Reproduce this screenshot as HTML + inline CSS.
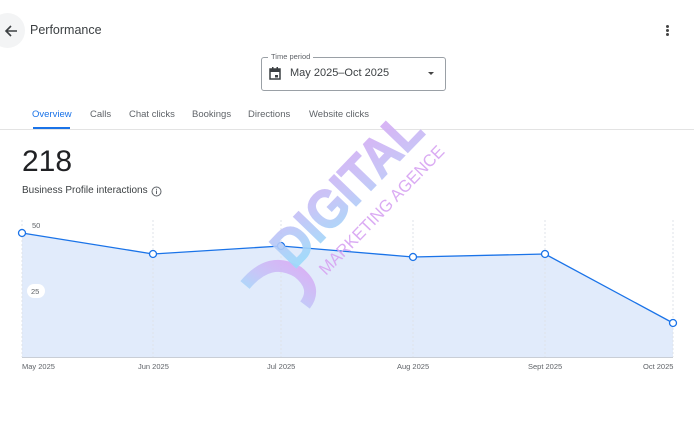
<!DOCTYPE html>
<html><head><meta charset="utf-8">
<style>
*{margin:0;padding:0;box-sizing:border-box}
html,body{width:694px;height:437px;background:#fff;overflow:hidden;font-family:"Liberation Sans",Arial,sans-serif;color:#202124;position:relative}
.abs{position:absolute}
</style></head><body>
<div class="abs" style="left:-10px;top:13px;width:35px;height:35px;border-radius:50%;background:#f3f4f5"></div>
<svg class="abs" style="left:3px;top:23px" width="16" height="16" viewBox="0 0 16 16"><path d="M14 8H3M8 3L3 8l5 5" stroke="#3c4043" stroke-width="1.6" fill="none"/></svg>
<div class="abs" style="left:30px;top:23px;font-size:12.5px;color:#3c4043">Performance</div>
<div class="abs" style="left:666px;top:25px;width:3px;height:3px;background:#444;border-radius:50%"></div>
<div class="abs" style="left:666px;top:29px;width:3px;height:3px;background:#444;border-radius:50%"></div>
<div class="abs" style="left:666px;top:33px;width:3px;height:3px;background:#444;border-radius:50%"></div>

<div class="abs" style="left:261px;top:57px;width:185px;height:34px;border:1px solid #9aa0a6;border-radius:3px"></div>
<div class="abs" style="left:268px;top:52px;background:#fff;padding:0 3px;font-size:7.5px;color:#5f6368">Time period</div>
<svg class="abs" style="left:269px;top:67px" width="12" height="13" viewBox="0 0 12 13"><rect x="1" y="2" width="10" height="10" fill="none" stroke="#3c4043" stroke-width="1.5"/><rect x="1" y="2" width="10" height="3" fill="#3c4043"/><rect x="3" y="0" width="1.5" height="3" fill="#3c4043"/><rect x="7.5" y="0" width="1.5" height="3" fill="#3c4043"/><rect x="6" y="8" width="3" height="2.5" fill="#3c4043"/></svg>
<div class="abs" style="left:290px;top:67px;font-size:11px;color:#3c4043">May 2025–Oct 2025</div>
<div class="abs" style="left:428px;top:72px;width:0;height:0;border-left:3.5px solid transparent;border-right:3.5px solid transparent;border-top:3.5px solid #444"></div>

<div class="abs" style="left:32px;top:109px;font-size:9.5px;color:#1a73e8">Overview</div>
<div class="abs" style="left:33px;top:127px;width:37px;height:2px;background:#1a73e8"></div>
<div class="abs" style="left:90px;top:109px;font-size:9.5px;color:#5f6368">Calls</div>
<div class="abs" style="left:129px;top:109px;font-size:9.5px;color:#5f6368">Chat clicks</div>
<div class="abs" style="left:192px;top:109px;font-size:9.5px;color:#5f6368">Bookings</div>
<div class="abs" style="left:248px;top:109px;font-size:9.5px;color:#5f6368">Directions</div>
<div class="abs" style="left:309px;top:109px;font-size:9.5px;color:#5f6368">Website clicks</div>
<div class="abs" style="left:0;top:129px;width:694px;height:1px;background:#e3e3e3"></div>

<div class="abs" style="left:22px;top:145px;font-size:30px;color:#202124">218</div>
<div class="abs" style="left:22px;top:185px;font-size:10px;color:#3c4043">Business Profile interactions</div>
<svg class="abs" style="left:151px;top:186px" width="11" height="11" viewBox="0 0 11 11"><circle cx="5.5" cy="5.5" r="4.5" fill="none" stroke="#5f6368" stroke-width="1"/><rect x="5" y="4.5" width="1" height="3.5" fill="#5f6368"/><rect x="5" y="2.8" width="1" height="1" fill="#5f6368"/></svg>

<svg class="abs" style="left:0;top:0" width="694" height="437" viewBox="0 0 694 437">
<defs>
<linearGradient id="g" x1="0" y1="1" x2="1" y2="0"><stop offset="0" stop-color="#8ee3fb"/><stop offset="0.5" stop-color="#c3c0f7"/><stop offset="1" stop-color="#dba4f3"/></linearGradient>
</defs>
<polygon points="22,233 153,254 281,246 413,257 545,254 673,323 673,357 22,357" fill="#e1ebfb"/>
<g stroke="#dfe3e8" stroke-width="1" stroke-dasharray="2,2">
<line x1="153" y1="220" x2="153" y2="357"/><line x1="281" y1="220" x2="281" y2="357"/><line x1="413" y1="220" x2="413" y2="357"/><line x1="545" y1="220" x2="545" y2="357"/><line x1="673" y1="220" x2="673" y2="357"/><line x1="22" y1="220" x2="22" y2="357"/>
</g>
<line x1="22" y1="357.5" x2="673" y2="357.5" stroke="#c9ced6"/>
<polyline points="22,233 153,254 281,246 413,257 545,254 673,323" fill="none" stroke="#1a73e8" stroke-width="1.3"/>
<g fill="#fff" stroke="#1a73e8" stroke-width="1.3">
<circle cx="22" cy="233" r="3.5"/><circle cx="153" cy="254" r="3.5"/><circle cx="281" cy="246" r="3.5"/><circle cx="413" cy="257" r="3.5"/><circle cx="545" cy="254" r="3.5"/><circle cx="673" cy="323" r="3.5"/>
</g>
<rect x="27" y="284" width="18" height="14" rx="7" fill="#fff"/>
<text x="31" y="294" font-size="7.5" fill="#5f6368" font-family="Liberation Sans,sans-serif">25</text>
<text x="32" y="228" font-size="7.5" fill="#5f6368" font-family="Liberation Sans,sans-serif">50</text>
<g font-size="7.5" fill="#5f6368" font-family="Liberation Sans,sans-serif">
<text x="22" y="369">May 2025</text><text x="138" y="369">Jun 2025</text><text x="267" y="369">Jul 2025</text><text x="397" y="369">Aug 2025</text><text x="528" y="369">Sept 2025</text><text x="643" y="369">Oct 2025</text>
</g>
<path d="M245,285 Q270,255 298,272 Q318,288 305,305" fill="none" stroke="url(#g)" stroke-width="12" opacity="0.85"/>
<text transform="translate(294,270) rotate(-46)" font-size="54" font-weight="bold" fill="url(#g)" opacity="0.9" stroke="url(#g)" stroke-width="1.5" font-family="Liberation Sans,sans-serif" textLength="190" lengthAdjust="spacingAndGlyphs">DIGITAL</text>
<text transform="translate(326,276) rotate(-46)" font-size="17" fill="#d7a3f2" opacity="0.9" font-family="Liberation Sans,sans-serif" textLength="172" lengthAdjust="spacingAndGlyphs">MARKETING AGENCE</text>
</svg>
</body></html>
